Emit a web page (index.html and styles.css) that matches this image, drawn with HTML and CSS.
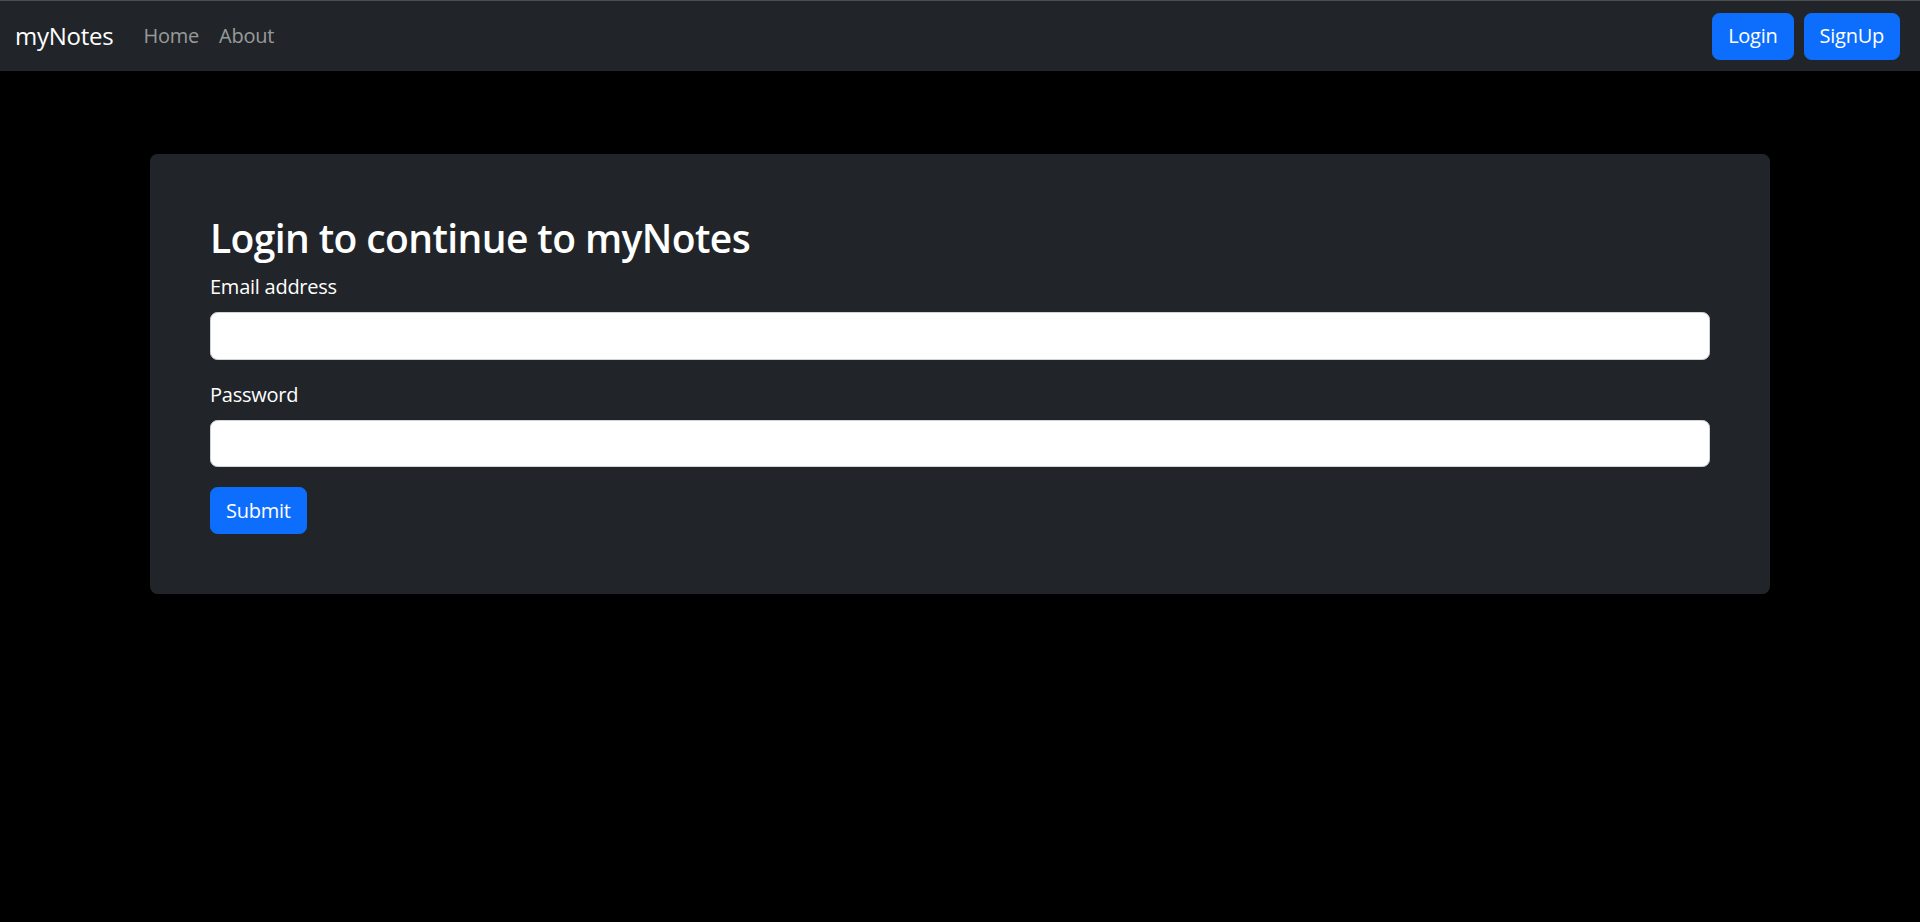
FILE: index.html
```html
<!DOCTYPE html>
<html lang="en">
<head>
<meta charset="utf-8">
<title>myNotes</title>
<link rel="stylesheet" href="styles.css">
</head>
<body>
<nav class="navbar">
  <div class="nav-inner">
    <a class="brand" href="#">myNotes</a>
    <ul class="nav-links">
      <li><a href="#">Home</a></li>
      <li><a href="#">About</a></li>
    </ul>
    <div class="nav-actions">
      <a class="btn" href="#">Login</a>
      <a class="btn" href="#">SignUp</a>
    </div>
  </div>
</nav>
<main class="container">
  <section class="card">
    <h2 class="title">Login to continue to myNotes</h2>
    <form class="form">
      <div class="field">
        <label class="label" for="email">Email address</label>
        <input class="input" type="email" id="email">
      </div>
      <div class="field">
        <label class="label" for="password">Password</label>
        <input class="input" type="password" id="password">
      </div>
      <button class="btn submit" type="submit">Submit</button>
    </form>
  </section>
</main>
</body>
</html>
```
FILE: styles.css
```css
* { box-sizing: border-box; }
html, body { margin: 0; padding: 0; }
body {
  background: #000;
  color: #fff;
  font-family: "Open Sans", "Noto Sans", "Liberation Sans", sans-serif;
  font-size: 20px;
  line-height: 1.5;
  letter-spacing: -0.25px;
  min-height: 922px;
}
.navbar {
  background: #212529;
  border-top: 1px solid #4b4e52;
  padding: 10px 0;
}
.nav-inner {
  display: flex;
  align-items: center;
  padding: 0 15px;
}
.brand {
  color: #fff;
  text-decoration: none;
  font-size: 24px;
  line-height: 37.5px;
  padding: 6.25px 0;
  margin-right: 20px;
}
.nav-links {
  display: flex;
  list-style: none;
  margin: 0;
  padding: 0;
}
.nav-links a {
  display: block;
  color: rgba(255,255,255,0.55);
  text-decoration: none;
  padding: 10px;
}
.nav-actions {
  margin-left: auto;
  display: flex;
}
.btn {
  display: inline-block;
  background: #0d6efd;
  color: #fff;
  border: 1px solid #0d6efd;
  border-radius: 7.5px;
  padding: 7.5px 15px;
  font-family: inherit;
  font-size: 20px;
  line-height: 30px;
  letter-spacing: -0.25px;
  text-decoration: none;
  cursor: pointer;
}
.nav-actions .btn { margin: 0 5px; }
.container {
  width: 1650px;
  margin: 0 auto;
  padding: 83px 15px 0;
}
.card {
  background: #212529;
  border-radius: 7.5px;
  padding: 60px;
}
.title {
  margin: 0 0 10px;
  font-size: 39px;
  font-weight: 600;
  line-height: 48px;
  letter-spacing: -0.6px;
}
.form { margin: 0; }
.field { margin-bottom: 20px; }
.label {
  display: block;
  margin-bottom: 10px;
}
.input {
  display: block;
  width: 100%;
  height: 47.5px;
  padding: 7.5px 15px;
  font-size: 20px;
  border: 1px solid #ced4da;
  border-radius: 7.5px;
  background: #fff;
  outline: none;
}
.submit { margin: 0; }
```
